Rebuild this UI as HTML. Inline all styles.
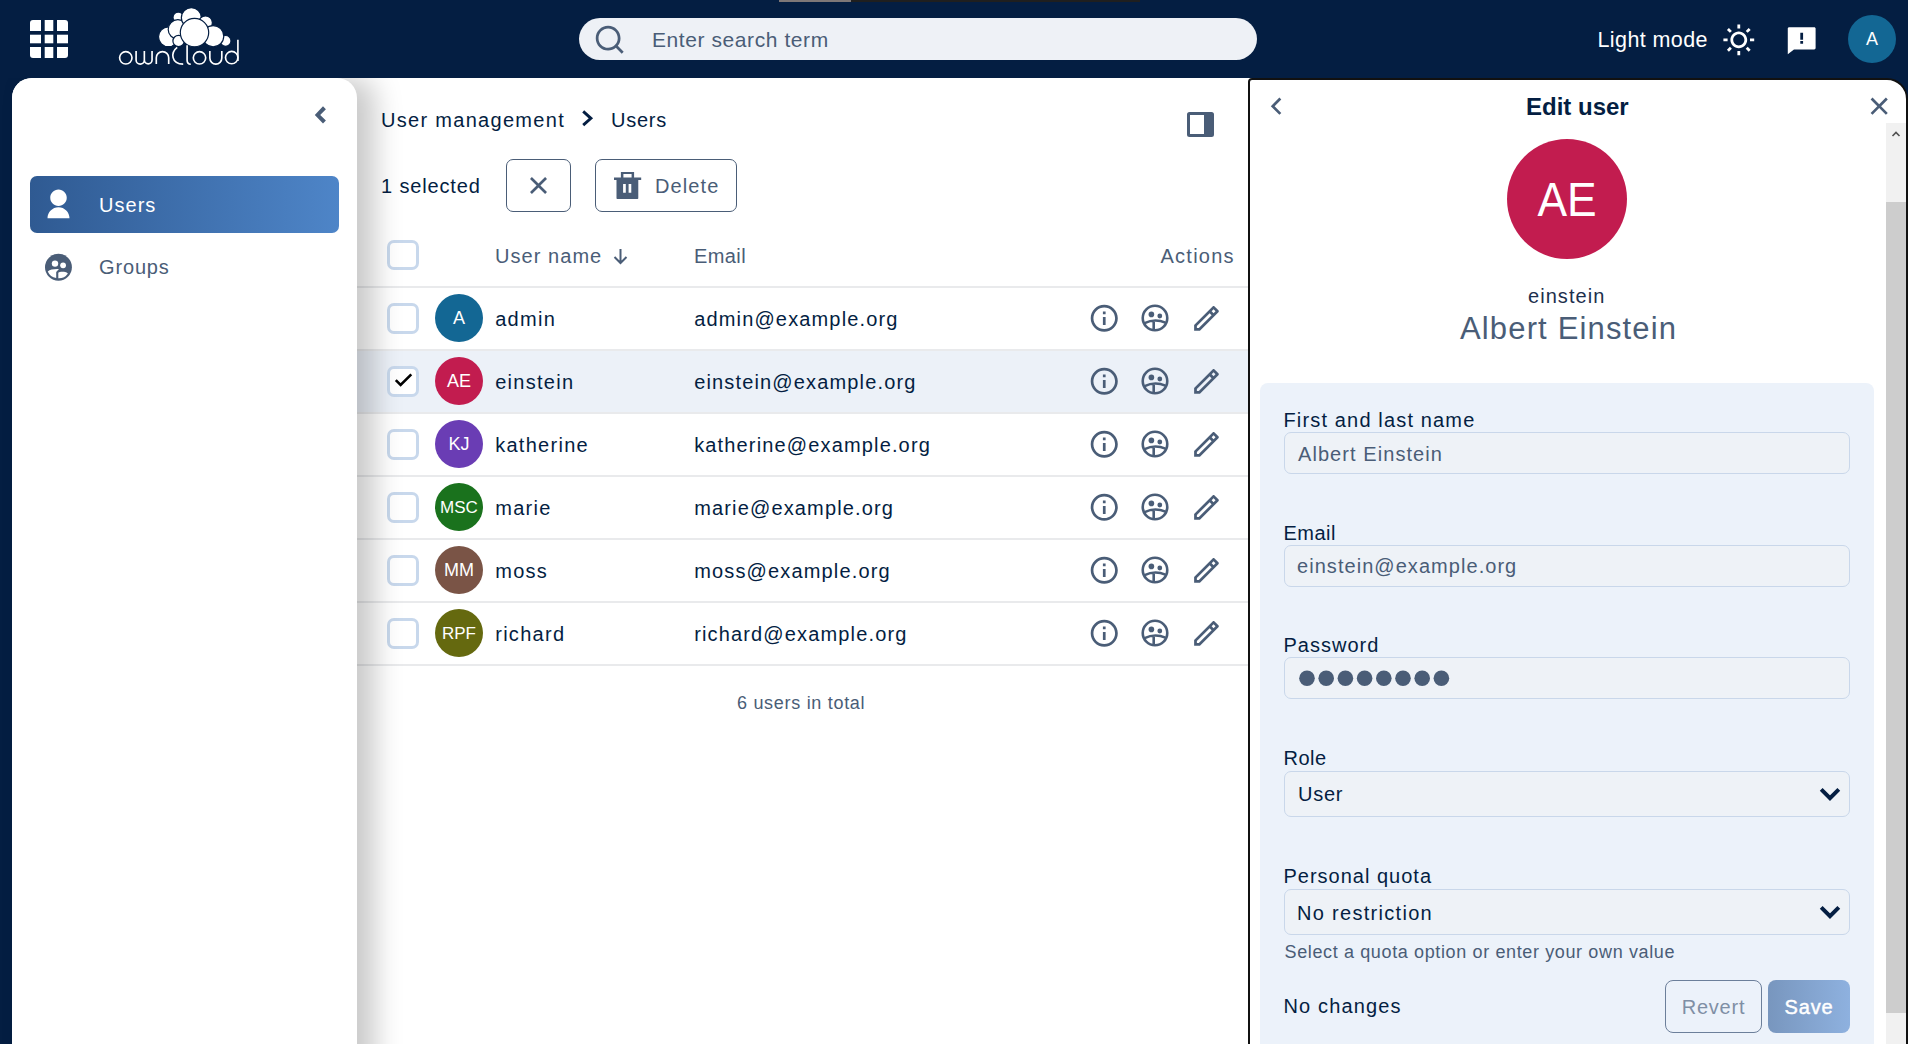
<!DOCTYPE html>
<html>
<head>
<meta charset="utf-8">
<style>
*{box-sizing:border-box;margin:0;padding:0}
html,body{width:1908px;height:1044px;overflow:hidden}
body{background:#041e42;font-family:"Liberation Sans",sans-serif;position:relative;color:#041e42}
.a{position:absolute}
.t{position:absolute;line-height:1;white-space:nowrap;font-size:20px}
svg{position:absolute;overflow:visible}
</style>
</head>
<body>
<!-- ===== HEADER ===== -->
<div class="a" style="left:779px;top:0;width:72px;height:2px;background:#7e7777"></div>
<div class="a" style="left:851px;top:0;width:289px;height:2px;background:#1f1f1f"></div>
<!-- app grid -->
<svg style="left:30px;top:20px" width="38" height="38" viewBox="0 0 38 38">
  <g fill="#fff">
    <path d="M3 0H11V11H0V3A3 3 0 0 1 3 0Z"/><rect x="14.7" y="0" width="8.6" height="11"/><path d="M27 0H35A3 3 0 0 1 38 3V11H27Z"/>
    <rect x="0" y="14.7" width="11" height="8.6"/><rect x="14.7" y="14.7" width="8.6" height="8.6"/><rect x="27" y="14.7" width="11" height="8.6"/>
    <path d="M0 27H11V38H3A3 3 0 0 1 0 35Z"/><rect x="14.7" y="27" width="8.6" height="11"/><path d="M27 27H38V35A3 3 0 0 1 35 38H27Z"/>
  </g>
</svg>
<!-- logo -->
<svg style="left:110px;top:0" width="140" height="70" viewBox="0 0 140 70" id="logo">
  <g fill="#fff" stroke="#041e42" stroke-width="1.2">
    <circle cx="68.3" cy="17.4" r="5.3"/>
    <circle cx="58.4" cy="36.8" r="9.9"/>
    <circle cx="67.9" cy="29.4" r="9.7"/>
    <circle cx="68.6" cy="41" r="5.7"/>
    <circle cx="81.35" cy="17.7" r="10"/>
    <circle cx="95.5" cy="22.8" r="6.9"/>
    <circle cx="115.6" cy="40.9" r="5.4"/>
    <circle cx="103.15" cy="36.15" r="10.6"/>
    <circle cx="84.5" cy="32.6" r="14.2"/>
  </g>
  <g fill="none" stroke="#fff" stroke-width="1.65">
    <circle cx="15.8" cy="57.85" r="6.2"/>
    <path d="M26.1 50.9V60A4.1 4.1 0 0 0 34.35 60V50.9M34.35 60A3.85 3.85 0 0 0 42.05 60V50.9"/>
    <path d="M46.3 64.1V57.8A6.2 6.2 0 0 1 58.7 57.8V64.1"/>
    <path d="M67.2 47.4C60.5 52.5 61 64.1 73.2 64.1"/>
    <path d="M77.1 45.35V60.2C77.1 62.6 78.3 64 80.8 64.2"/>
    <circle cx="89.5" cy="57.85" r="6.2"/>
    <path d="M99.85 50.9V58.1A5.97 5.97 0 0 0 111.8 58.1V50.9"/>
    <circle cx="121.7" cy="57.6" r="6.2"/>
    <path d="M127.9 39.85V61"/>
  </g>
</svg>
<!-- search -->
<div class="a" style="left:579px;top:18px;width:678px;height:42px;border-radius:21px;background:#eef1f6"></div>
<svg style="left:593.1px;top:22.8px" width="33" height="33" viewBox="0 0 24 24"><path fill="#4a5d77" d="M18.031 16.6168L22.3137 20.8995L20.8995 22.3137L16.6168 18.031C15.0769 19.263 13.124 20 11 20C6.032 20 2 15.968 2 11C2 6.032 6.032 2 11 2C15.968 2 20 6.032 20 11C20 13.124 19.263 15.0769 18.031 16.6168ZM16.0247 15.8748C17.2475 14.6146 18 12.8956 18 11C18 7.1325 14.8675 4 11 4C7.1325 4 4 7.1325 4 11C4 14.8675 7.1325 18 11 18C12.8956 18 14.6146 17.2475 15.8748 16.0247L16.0247 15.8748Z"/></svg>
<div class="t" style="left:652px;top:29.2px;font-size:21px;letter-spacing:0.58px;color:#4a5d77">Enter search term</div>
<!-- light mode -->
<div class="t" style="left:1597.5px;top:29.5px;font-size:21.5px;letter-spacing:0.4px;color:#fff">Light mode</div>
<svg style="left:1721.7px;top:22.7px" width="33.6" height="33.6" viewBox="0 0 24 24"><path fill="#fff" d="M12 18C8.68629 18 6 15.3137 6 12C6 8.68629 8.68629 6 12 6C15.3137 6 18 8.68629 18 12C18 15.3137 15.3137 18 12 18ZM12 16C14.2091 16 16 14.2091 16 12C16 9.79086 14.2091 8 12 8C9.79086 8 8 9.79086 8 12C8 14.2091 9.79086 16 12 16ZM11 1H13V4H11V1ZM11 20H13V23H11V20ZM3.51472 4.92893L4.92893 3.51472L7.05025 5.63604L5.63604 7.05025L3.51472 4.92893ZM16.9497 18.364L18.364 16.9497L20.4853 19.0711L19.0711 20.4853L16.9497 18.364ZM19.0711 3.51472L20.4853 4.92893L18.364 7.05025L16.9497 5.63604L19.0711 3.51472ZM5.63604 16.9497L7.05025 18.364L4.92893 20.4853L3.51472 19.0711L5.63604 16.9497ZM23 11V13H20V11H23ZM4 11V13H1V11H4Z"/></svg>
<svg style="left:1784.8px;top:22.6px" width="33.4" height="33.4" viewBox="0 0 24 24"><path fill="#fff" d="M6.45455 19L2 22.5V4C2 3.44772 2.44772 3 3 3H21C21.5523 3 22 3.44772 22 4V18C22 18.5523 21.5523 19 21 19H6.45455ZM11 13V15H13V13H11ZM11 7V12H13V7H11Z"/></svg>
<div class="a" style="left:1848px;top:15px;width:48px;height:48px;border-radius:50%;background:#136794"></div>
<div class="t" style="left:1848px;width:48px;text-align:center;top:30px;font-size:18px;color:#fff">A</div>

<!-- ===== MAIN WHITE AREA ===== -->
<div class="a" style="left:12px;top:78px;width:1240px;height:966px;background:#fff;border-top-left-radius:20px"></div>

<!-- table area content -->
<div id="main">
  <div class="t" style="left:381px;top:109.6px;letter-spacing:1.3px">User management</div>
  <svg style="left:0;top:0" width="1" height="1"><path d="M583.2 111.4L590.9 118.3L583.2 125.2" fill="none" stroke="#041e42" stroke-width="2.9"/></svg>
  <div class="t" style="left:611px;top:109.6px;letter-spacing:0.75px">Users</div>
  <svg style="left:1187px;top:112px" width="27" height="25" viewBox="0 0 27 25"><rect x="1.5" y="1.5" width="24" height="22" rx="1" fill="none" stroke="#4a5d77" stroke-width="3"/><rect x="17" y="1.5" width="8.5" height="22" fill="#4a5d77"/></svg>

  <div class="t" style="left:381px;top:176px;letter-spacing:0.85px">1 selected</div>
  <div class="a" style="left:506px;top:159px;width:65px;height:53px;border:1px solid #4a5d77;border-radius:7px"></div>
  <svg style="left:530px;top:177px" width="17" height="17" viewBox="5.6367 5.6367 12.728 12.728"><path fill="#4a5d77" d="M12.0007 10.5865L16.9504 5.63672L18.3646 7.05093L13.4149 12.0007L18.3646 16.9504L16.9504 18.3646L12.0007 13.4149L7.05093 18.3646L5.63672 16.9504L10.5865 12.0007L5.63672 7.05093L7.05093 5.63672L12.0007 10.5865Z"/></svg>
  <div class="a" style="left:595px;top:159px;width:142px;height:53px;border:1px solid #4a5d77;border-radius:7px"></div>
  <svg style="left:614px;top:171.8px" width="27.2" height="27" viewBox="0 0 27.2 27"><path fill="#4a5d77" d="M6.9 0H20.1V5.4H27.2V8.1H24.3V26.2A0.8 0.8 0 0 1 23.5 27H3.3A0.8 0.8 0 0 1 2.5 26.2V8.1H0V5.4H6.9ZM9.4 2.1V5.4H17.6V2.1ZM9.1 11.9V20.7H11.8V11.9ZM14.6 11.9V20.7H17.3V11.9Z"/></svg>
  <div class="t" style="left:655px;top:176.2px;letter-spacing:1.1px;color:#4a5d77">Delete</div>

  <!-- table header -->
  <div class="a" style="left:387px;top:239.5px;width:31.5px;height:30.5px;border:3px solid #c8d8ec;border-radius:7px;background:#fff"></div>
  <div class="t" style="left:495px;top:246px;letter-spacing:1.05px;color:#4a5d77">User name</div>
  <svg style="left:611px;top:246px" width="19" height="19" viewBox="0 0 19 19"><path d="M9.5 3V17M3.5 11L9.5 17L15.5 11" fill="none" stroke="#4a5d77" stroke-width="2"/></svg>
  <div class="t" style="left:694px;top:246px;letter-spacing:0.4px;color:#4a5d77">Email</div>
  <div class="t" style="left:1160.5px;top:246px;letter-spacing:1.25px;color:#4a5d77">Actions</div>
  <div class="a" style="left:357px;top:286px;width:891px;height:2px;background:#e9eaec"></div>
</div>

<div id="rows">
<div class="a" style="left:357px;top:349px;width:891px;height:2px;background:#e9eaec"></div>
<div class="a" style="left:387px;top:303.0px;width:31.5px;height:31px;border:3px solid #c8d8ec;border-radius:7px;background:#fff"></div>
<div class="a" style="left:435px;top:293.9px;width:48px;height:48px;border-radius:50%;background:#136794"></div>
<div class="t" style="left:435px;width:48px;text-align:center;top:309.3px;font-size:18px;color:#fff">A</div>
<div class="t" style="left:495.2px;top:309.4px;letter-spacing:1.28px">admin</div>
<div class="t" style="left:694.2px;top:309.4px;letter-spacing:1.15px">admin@example.org</div>
<svg style="left:1088.2px;top:302.0px" width="32.5" height="32.5" viewBox="0 0 24 24"><path fill="#4a5d77" d="M12 22C6.47715 22 2 17.5228 2 12C2 6.47715 6.47715 2 12 2C17.5228 2 22 6.47715 22 12C22 17.5228 17.5228 22 12 22ZM12 20C16.4183 20 20 16.4183 20 12C20 7.58172 16.4183 4 12 4C7.58172 4 4 7.58172 4 12C4 16.4183 7.58172 20 12 20ZM11 7H13V9H11V7ZM11 11H13V17H11V11Z"/></svg>
<svg style="left:1139.4px;top:302.3px" width="32" height="32" viewBox="-16 -16 32 32"><g fill="none" stroke="#4a5d77" stroke-width="2.6"><circle r="12.27"/><path d="M-10.4 5.1Q0 0.2 10.4 4.6M-1.3 2.6V12"/></g><circle cx="-3.6" cy="-3.6" r="2.8" fill="#4a5d77"/><circle cx="4.8" cy="-2" r="2.4" fill="#4a5d77"/></svg>
<svg style="left:1190.1px;top:302.1px" width="33.0" height="33.0" viewBox="0 0 24 24"><path fill="#4a5d77" d="M15.7279 9.57627L14.3137 8.16206L5 17.4758V18.89H6.41421L15.7279 9.57627ZM17.1421 8.16206L18.5563 6.74785L17.1421 5.33363L15.7279 6.74785L17.1421 8.16206ZM7.24264 20.89H3V16.6473L16.435 3.21231C16.8256 2.82179 17.4587 2.82179 17.8492 3.21231L20.6777 6.04074C21.0682 6.43126 21.0682 7.06443 20.6777 7.45495L7.24264 20.89Z"/></svg>
<div class="a" style="left:357px;top:351px;width:891px;height:62px;background:#ecf1f8"></div>
<div class="a" style="left:357px;top:412px;width:891px;height:2px;background:#e9eaec"></div>
<div class="a" style="left:387px;top:366.0px;width:31.5px;height:31px;border:3px solid #c8d8ec;border-radius:7px;background:#fff"></div>
<svg style="left:394px;top:372.3px" width="20" height="18" viewBox="0 0 20 18"><path d="M1.8 8.2L6.6 13L17.3 2.3" fill="none" stroke="#000" stroke-width="2.6"/></svg>
<div class="a" style="left:435px;top:356.9px;width:48px;height:48px;border-radius:50%;background:#c21c4f"></div>
<div class="t" style="left:435px;width:48px;text-align:center;top:372.3px;font-size:18px;color:#fff">AE</div>
<div class="t" style="left:495.2px;top:372.4px;letter-spacing:1.28px">einstein</div>
<div class="t" style="left:694.2px;top:372.4px;letter-spacing:1.15px">einstein@example.org</div>
<svg style="left:1088.2px;top:365.0px" width="32.5" height="32.5" viewBox="0 0 24 24"><path fill="#4a5d77" d="M12 22C6.47715 22 2 17.5228 2 12C2 6.47715 6.47715 2 12 2C17.5228 2 22 6.47715 22 12C22 17.5228 17.5228 22 12 22ZM12 20C16.4183 20 20 16.4183 20 12C20 7.58172 16.4183 4 12 4C7.58172 4 4 7.58172 4 12C4 16.4183 7.58172 20 12 20ZM11 7H13V9H11V7ZM11 11H13V17H11V11Z"/></svg>
<svg style="left:1139.4px;top:365.3px" width="32" height="32" viewBox="-16 -16 32 32"><g fill="none" stroke="#4a5d77" stroke-width="2.6"><circle r="12.27"/><path d="M-10.4 5.1Q0 0.2 10.4 4.6M-1.3 2.6V12"/></g><circle cx="-3.6" cy="-3.6" r="2.8" fill="#4a5d77"/><circle cx="4.8" cy="-2" r="2.4" fill="#4a5d77"/></svg>
<svg style="left:1190.1px;top:365.1px" width="33.0" height="33.0" viewBox="0 0 24 24"><path fill="#4a5d77" d="M15.7279 9.57627L14.3137 8.16206L5 17.4758V18.89H6.41421L15.7279 9.57627ZM17.1421 8.16206L18.5563 6.74785L17.1421 5.33363L15.7279 6.74785L17.1421 8.16206ZM7.24264 20.89H3V16.6473L16.435 3.21231C16.8256 2.82179 17.4587 2.82179 17.8492 3.21231L20.6777 6.04074C21.0682 6.43126 21.0682 7.06443 20.6777 7.45495L7.24264 20.89Z"/></svg>
<div class="a" style="left:357px;top:475px;width:891px;height:2px;background:#e9eaec"></div>
<div class="a" style="left:387px;top:429.0px;width:31.5px;height:31px;border:3px solid #c8d8ec;border-radius:7px;background:#fff"></div>
<div class="a" style="left:435px;top:419.9px;width:48px;height:48px;border-radius:50%;background:#6a3db4"></div>
<div class="t" style="left:435px;width:48px;text-align:center;top:435.3px;font-size:18px;color:#fff">KJ</div>
<div class="t" style="left:495.2px;top:435.4px;letter-spacing:1.28px">katherine</div>
<div class="t" style="left:694.2px;top:435.4px;letter-spacing:1.15px">katherine@example.org</div>
<svg style="left:1088.2px;top:428.0px" width="32.5" height="32.5" viewBox="0 0 24 24"><path fill="#4a5d77" d="M12 22C6.47715 22 2 17.5228 2 12C2 6.47715 6.47715 2 12 2C17.5228 2 22 6.47715 22 12C22 17.5228 17.5228 22 12 22ZM12 20C16.4183 20 20 16.4183 20 12C20 7.58172 16.4183 4 12 4C7.58172 4 4 7.58172 4 12C4 16.4183 7.58172 20 12 20ZM11 7H13V9H11V7ZM11 11H13V17H11V11Z"/></svg>
<svg style="left:1139.4px;top:428.3px" width="32" height="32" viewBox="-16 -16 32 32"><g fill="none" stroke="#4a5d77" stroke-width="2.6"><circle r="12.27"/><path d="M-10.4 5.1Q0 0.2 10.4 4.6M-1.3 2.6V12"/></g><circle cx="-3.6" cy="-3.6" r="2.8" fill="#4a5d77"/><circle cx="4.8" cy="-2" r="2.4" fill="#4a5d77"/></svg>
<svg style="left:1190.1px;top:428.1px" width="33.0" height="33.0" viewBox="0 0 24 24"><path fill="#4a5d77" d="M15.7279 9.57627L14.3137 8.16206L5 17.4758V18.89H6.41421L15.7279 9.57627ZM17.1421 8.16206L18.5563 6.74785L17.1421 5.33363L15.7279 6.74785L17.1421 8.16206ZM7.24264 20.89H3V16.6473L16.435 3.21231C16.8256 2.82179 17.4587 2.82179 17.8492 3.21231L20.6777 6.04074C21.0682 6.43126 21.0682 7.06443 20.6777 7.45495L7.24264 20.89Z"/></svg>
<div class="a" style="left:357px;top:538px;width:891px;height:2px;background:#e9eaec"></div>
<div class="a" style="left:387px;top:492.0px;width:31.5px;height:31px;border:3px solid #c8d8ec;border-radius:7px;background:#fff"></div>
<div class="a" style="left:435px;top:482.9px;width:48px;height:48px;border-radius:50%;background:#1a721d"></div>
<div class="t" style="left:435px;width:48px;text-align:center;top:499.1px;font-size:17px;color:#fff">MSC</div>
<div class="t" style="left:495.2px;top:498.4px;letter-spacing:1.28px">marie</div>
<div class="t" style="left:694.2px;top:498.4px;letter-spacing:1.15px">marie@example.org</div>
<svg style="left:1088.2px;top:491.0px" width="32.5" height="32.5" viewBox="0 0 24 24"><path fill="#4a5d77" d="M12 22C6.47715 22 2 17.5228 2 12C2 6.47715 6.47715 2 12 2C17.5228 2 22 6.47715 22 12C22 17.5228 17.5228 22 12 22ZM12 20C16.4183 20 20 16.4183 20 12C20 7.58172 16.4183 4 12 4C7.58172 4 4 7.58172 4 12C4 16.4183 7.58172 20 12 20ZM11 7H13V9H11V7ZM11 11H13V17H11V11Z"/></svg>
<svg style="left:1139.4px;top:491.3px" width="32" height="32" viewBox="-16 -16 32 32"><g fill="none" stroke="#4a5d77" stroke-width="2.6"><circle r="12.27"/><path d="M-10.4 5.1Q0 0.2 10.4 4.6M-1.3 2.6V12"/></g><circle cx="-3.6" cy="-3.6" r="2.8" fill="#4a5d77"/><circle cx="4.8" cy="-2" r="2.4" fill="#4a5d77"/></svg>
<svg style="left:1190.1px;top:491.1px" width="33.0" height="33.0" viewBox="0 0 24 24"><path fill="#4a5d77" d="M15.7279 9.57627L14.3137 8.16206L5 17.4758V18.89H6.41421L15.7279 9.57627ZM17.1421 8.16206L18.5563 6.74785L17.1421 5.33363L15.7279 6.74785L17.1421 8.16206ZM7.24264 20.89H3V16.6473L16.435 3.21231C16.8256 2.82179 17.4587 2.82179 17.8492 3.21231L20.6777 6.04074C21.0682 6.43126 21.0682 7.06443 20.6777 7.45495L7.24264 20.89Z"/></svg>
<div class="a" style="left:357px;top:601px;width:891px;height:2px;background:#e9eaec"></div>
<div class="a" style="left:387px;top:555.0px;width:31.5px;height:31px;border:3px solid #c8d8ec;border-radius:7px;background:#fff"></div>
<div class="a" style="left:435px;top:545.9px;width:48px;height:48px;border-radius:50%;background:#7a5446"></div>
<div class="t" style="left:435px;width:48px;text-align:center;top:561.3px;font-size:18px;color:#fff">MM</div>
<div class="t" style="left:495.2px;top:561.4px;letter-spacing:1.28px">moss</div>
<div class="t" style="left:694.2px;top:561.4px;letter-spacing:1.15px">moss@example.org</div>
<svg style="left:1088.2px;top:554.0px" width="32.5" height="32.5" viewBox="0 0 24 24"><path fill="#4a5d77" d="M12 22C6.47715 22 2 17.5228 2 12C2 6.47715 6.47715 2 12 2C17.5228 2 22 6.47715 22 12C22 17.5228 17.5228 22 12 22ZM12 20C16.4183 20 20 16.4183 20 12C20 7.58172 16.4183 4 12 4C7.58172 4 4 7.58172 4 12C4 16.4183 7.58172 20 12 20ZM11 7H13V9H11V7ZM11 11H13V17H11V11Z"/></svg>
<svg style="left:1139.4px;top:554.3px" width="32" height="32" viewBox="-16 -16 32 32"><g fill="none" stroke="#4a5d77" stroke-width="2.6"><circle r="12.27"/><path d="M-10.4 5.1Q0 0.2 10.4 4.6M-1.3 2.6V12"/></g><circle cx="-3.6" cy="-3.6" r="2.8" fill="#4a5d77"/><circle cx="4.8" cy="-2" r="2.4" fill="#4a5d77"/></svg>
<svg style="left:1190.1px;top:554.1px" width="33.0" height="33.0" viewBox="0 0 24 24"><path fill="#4a5d77" d="M15.7279 9.57627L14.3137 8.16206L5 17.4758V18.89H6.41421L15.7279 9.57627ZM17.1421 8.16206L18.5563 6.74785L17.1421 5.33363L15.7279 6.74785L17.1421 8.16206ZM7.24264 20.89H3V16.6473L16.435 3.21231C16.8256 2.82179 17.4587 2.82179 17.8492 3.21231L20.6777 6.04074C21.0682 6.43126 21.0682 7.06443 20.6777 7.45495L7.24264 20.89Z"/></svg>
<div class="a" style="left:357px;top:664px;width:891px;height:2px;background:#e9eaec"></div>
<div class="a" style="left:387px;top:618.0px;width:31.5px;height:31px;border:3px solid #c8d8ec;border-radius:7px;background:#fff"></div>
<div class="a" style="left:435px;top:608.9px;width:48px;height:48px;border-radius:50%;background:#65690f"></div>
<div class="t" style="left:435px;width:48px;text-align:center;top:625.1px;font-size:17px;color:#fff">RPF</div>
<div class="t" style="left:495.2px;top:624.4px;letter-spacing:1.28px">richard</div>
<div class="t" style="left:694.2px;top:624.4px;letter-spacing:1.15px">richard@example.org</div>
<svg style="left:1088.2px;top:617.0px" width="32.5" height="32.5" viewBox="0 0 24 24"><path fill="#4a5d77" d="M12 22C6.47715 22 2 17.5228 2 12C2 6.47715 6.47715 2 12 2C17.5228 2 22 6.47715 22 12C22 17.5228 17.5228 22 12 22ZM12 20C16.4183 20 20 16.4183 20 12C20 7.58172 16.4183 4 12 4C7.58172 4 4 7.58172 4 12C4 16.4183 7.58172 20 12 20ZM11 7H13V9H11V7ZM11 11H13V17H11V11Z"/></svg>
<svg style="left:1139.4px;top:617.3px" width="32" height="32" viewBox="-16 -16 32 32"><g fill="none" stroke="#4a5d77" stroke-width="2.6"><circle r="12.27"/><path d="M-10.4 5.1Q0 0.2 10.4 4.6M-1.3 2.6V12"/></g><circle cx="-3.6" cy="-3.6" r="2.8" fill="#4a5d77"/><circle cx="4.8" cy="-2" r="2.4" fill="#4a5d77"/></svg>
<svg style="left:1190.1px;top:617.1px" width="33.0" height="33.0" viewBox="0 0 24 24"><path fill="#4a5d77" d="M15.7279 9.57627L14.3137 8.16206L5 17.4758V18.89H6.41421L15.7279 9.57627ZM17.1421 8.16206L18.5563 6.74785L17.1421 5.33363L15.7279 6.74785L17.1421 8.16206ZM7.24264 20.89H3V16.6473L16.435 3.21231C16.8256 2.82179 17.4587 2.82179 17.8492 3.21231L20.6777 6.04074C21.0682 6.43126 21.0682 7.06443 20.6777 7.45495L7.24264 20.89Z"/></svg>
</div><!--/rows-->

<div class="t" style="left:737px;top:693.8px;font-size:18px;letter-spacing:0.7px;color:#4a5d77">6 users in total</div>

<!-- ===== SIDEBAR ===== -->
<div class="a" style="left:0;top:78px;width:1248px;height:966px;overflow:hidden;z-index:5"><div class="a" style="left:12px;top:0;width:345px;height:1000px;background:#fff;border-radius:20px 20px 0 0;box-shadow:18px 0 28px rgba(0,0,0,0.21)"></div></div>
<div id="side" style="position:absolute;left:0;top:0;z-index:6">
  <svg style="left:0;top:0" width="1" height="1"><path fill="#4a5d77" d="M314.8 114.9L323 106.3L325.9 109.3L320.2 114.9L325.9 120.5L323 123.6Z"/></svg>
  <div class="a" style="left:30px;top:176px;width:309px;height:57px;border-radius:7px;background:linear-gradient(90deg,#2f5a92 0%,#4e85c8 100%)"></div>
  <svg style="left:42px;top:188px" width="33" height="33" viewBox="0 0 24 24"><path fill="#fff" d="M4 22C4 17.5817 7.58172 14 12 14C16.4183 14 20 17.5817 20 22H4ZM12 13C8.685 13 6 10.315 6 7C6 3.685 8.685 1 12 1C15.315 1 18 3.685 18 7C18 10.315 15.315 13 12 13Z"/></svg>
  <div class="t" style="left:99px;top:194.6px;letter-spacing:1.02px;color:#fff">Users</div>
  <svg style="left:40px;top:250px" width="38" height="36" viewBox="0 0 38 36">
    <circle cx="18.45" cy="17.2" r="13.45" fill="#4a5d77"/>
    <g fill="#fff"><circle cx="15" cy="13.6" r="3.2"/><circle cx="23.1" cy="15.3" r="2.9"/>
    <path d="M7.76 21.4C10 19.5 14 18.9 18.97 19.1L16.2 22.1V27.9A11 11 0 0 1 7.76 21.4Z"/>
    <path d="M18.3 22.8C20 21.5 25 21.3 27.9 23.4A11.1 11.1 0 0 1 18.3 28.3Z"/></g>
  </svg>
  <div class="t" style="left:99px;top:257px;letter-spacing:0.85px;color:#4a5d77">Groups</div>
</div>

<!-- ===== RIGHT PANEL ===== -->
<div class="a" style="left:1248px;top:78px;width:660px;height:980px;background:#fff;border:2px solid #111;border-radius:4px 21px 0 0;z-index:7"></div>
<div id="panel" style="position:absolute;left:0;top:0;z-index:8">
  <svg style="left:1260.3px;top:90.2px" width="32.4" height="32.4" viewBox="0 0 24 24"><path fill="#4a5d77" d="M10.8284 12.0007L15.7782 16.9504L14.364 18.3646L8 12.0007L14.364 5.63672L15.7782 7.05093L10.8284 12.0007Z"/></svg>
  <div class="t" style="left:1526px;top:94.9px;font-size:24px;font-weight:bold;color:#041e42">Edit user</div>
  <svg style="left:1863.3px;top:90.2px" width="32.4" height="32.4" viewBox="0 0 24 24"><path fill="#4a5d77" d="M12.0007 10.5865L16.9504 5.63672L18.3646 7.05093L13.4149 12.0007L18.3646 16.9504L16.9504 18.3646L12.0007 13.4149L7.05093 18.3646L5.63672 16.9504L10.5865 12.0007L5.63672 7.05093L7.05093 5.63672L12.0007 10.5865Z"/></svg>
  <!-- scrollbar -->
  <div class="a" style="left:1886px;top:123px;width:20px;height:921px;background:#f1f1f1"></div>
  <div class="a" style="left:1886px;top:202px;width:20px;height:811px;background:#cdcdcd"></div>
  <svg style="left:1891px;top:130px" width="10" height="8" viewBox="0 0 10 8"><path d="M1.5 6L5 2.5L8.5 6" fill="none" stroke="#505050" stroke-width="1.6"/></svg>
  <!-- avatar -->
  <div class="a" style="left:1507px;top:138.7px;width:120px;height:120px;border-radius:50%;background:#c21c4f"></div>
  <div class="t" style="left:1507px;width:120px;text-align:center;top:174.5px;font-size:49px;color:#fff;transform:scaleX(0.905)">AE</div>
  <div class="t" style="left:1528px;top:286px;letter-spacing:1.05px;color:#1d2f4d">einstein</div>
  <div class="t" style="left:1460px;top:312.5px;font-size:31px;letter-spacing:1.15px;color:#4a5d77">Albert Einstein</div>
  <!-- form -->
  <div class="a" style="left:1260px;top:383px;width:614px;height:700px;border-radius:8px;background:#ecf2fa"></div>
  <div class="t" style="left:1283.5px;top:410.2px;letter-spacing:1.15px;color:#041e42">First and last name</div>
  <div class="a" style="left:1284px;top:432px;width:566px;height:42px;border:1px solid #c9d7ea;border-radius:7px;background:#eef2f7"></div>
  <div class="t" style="left:1298px;top:444px;letter-spacing:1.07px;color:#4a5d77">Albert Einstein</div>

  <div class="t" style="left:1283.5px;top:523.1px;letter-spacing:0.5px;color:#041e42">Email</div>
  <div class="a" style="left:1284px;top:545px;width:566px;height:42px;border:1px solid #c9d7ea;border-radius:7px;background:#eef2f7"></div>
  <div class="t" style="left:1297px;top:556px;letter-spacing:1.05px;color:#4a5d77">einstein@example.org</div>

  <div class="t" style="left:1283.5px;top:635.3px;letter-spacing:1px;color:#041e42">Password</div>
  <div class="a" style="left:1284px;top:657px;width:566px;height:42px;border:1px solid #c9d7ea;border-radius:7px;background:#eef2f7"></div>
  <svg style="left:1290px;top:670px" width="170" height="17" viewBox="0 0 170 17"><g fill="#4a5d77">
    <circle cx="17" cy="8.2" r="7.8"/><circle cx="36.2" cy="8.2" r="7.8"/><circle cx="55.4" cy="8.2" r="7.8"/><circle cx="74.6" cy="8.2" r="7.8"/><circle cx="93.8" cy="8.2" r="7.8"/><circle cx="113" cy="8.2" r="7.8"/><circle cx="132.2" cy="8.2" r="7.8"/><circle cx="151.4" cy="8.2" r="7.8"/>
  </g></svg>

  <div class="t" style="left:1283.5px;top:747.9px;letter-spacing:0.5px;color:#041e42">Role</div>
  <div class="a" style="left:1284px;top:770.6px;width:566px;height:46px;border:1px solid #c9d7ea;border-radius:7px;background:#eef2f7"></div>
  <div class="t" style="left:1298px;top:784px;letter-spacing:0.75px;color:#041e42">User</div>
  <svg style="left:1818.5px;top:787px" width="22" height="15" viewBox="0 0 22 15"><path d="M2.2 2.4L11 11.2L19.8 2.4" fill="none" stroke="#041e42" stroke-width="4"/></svg>

  <div class="t" style="left:1283.5px;top:865.7px;letter-spacing:1px;color:#041e42">Personal quota</div>
  <div class="a" style="left:1284px;top:888.8px;width:566px;height:46px;border:1px solid #c9d7ea;border-radius:7px;background:#eef2f7"></div>
  <div class="t" style="left:1297px;top:903px;letter-spacing:1.3px;color:#041e42">No restriction</div>
  <svg style="left:1818.5px;top:905px" width="22" height="15" viewBox="0 0 22 15"><path d="M2.2 2.4L11 11.2L19.8 2.4" fill="none" stroke="#041e42" stroke-width="4"/></svg>

  <div class="t" style="left:1284.5px;top:942.8px;font-size:18px;letter-spacing:0.63px;color:#4a5d77">Select a quota option or enter your own value</div>

  <div class="t" style="left:1283.5px;top:995.9px;letter-spacing:1.13px;color:#041e42">No changes</div>
  <div class="a" style="left:1665px;top:980px;width:97px;height:53px;border:1px solid #6c7f9a;border-radius:8px"></div>
  <div class="t" style="left:1665px;width:97px;text-align:center;top:997px;letter-spacing:0.8px;color:#7f8fa5">Revert</div>
  <div class="a" style="left:1768px;top:980px;width:82px;height:53px;border-radius:8px;background:linear-gradient(90deg,#7896be,#8eb1df)"></div>
  <div class="t" style="left:1768px;width:82px;text-align:center;top:997px;letter-spacing:0.9px;color:#fff;-webkit-text-stroke:0.45px #fff">Save</div>
</div>


</body>
</html>
